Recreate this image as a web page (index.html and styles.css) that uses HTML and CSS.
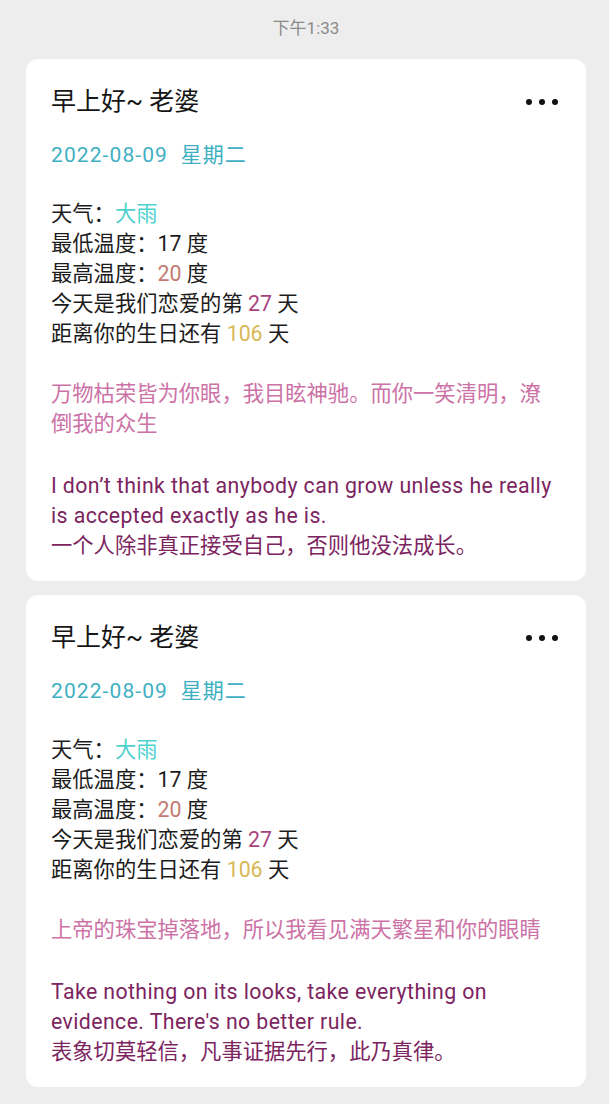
FILE: index.html
```html
<!DOCTYPE html>
<html lang="zh-CN">
<head>
<meta charset="utf-8">
<title>早上好</title>
<link rel="stylesheet" href="styles.css">
</head>
<body>
<div class="page">
  <div class="time">下午1:33</div>

  <div class="card">
    <div class="head">
      <div class="title">早上好~ 老婆</div>
      <div class="more"><span></span><span></span><span></span></div>
    </div>
    <div class="date">2022-08-09&nbsp;&nbsp;星期二</div>
    <div class="stats">
      <div>天气：<span class="rain">大雨</span></div>
      <div>最低温度：17 度</div>
      <div>最高温度：<span class="high">20</span> 度</div>
      <div>今天是我们恋爱的第 <span class="love">27</span> 天</div>
      <div>距离你的生日还有 <span class="bday">106</span> 天</div>
    </div>
    <div class="quote">万物枯荣皆为你眼，我目眩神驰。而你一笑清明，潦倒我的众生</div>
    <div class="saying"><span class="en">I don’t think that anybody can grow unless he really is accepted exactly as he is.</span><br>一个人除非真正接受自己，否则他没法成长。</div>
  </div>

  <div class="card">
    <div class="head">
      <div class="title">早上好~ 老婆</div>
      <div class="more"><span></span><span></span><span></span></div>
    </div>
    <div class="date">2022-08-09&nbsp;&nbsp;星期二</div>
    <div class="stats">
      <div>天气：<span class="rain">大雨</span></div>
      <div>最低温度：17 度</div>
      <div>最高温度：<span class="high">20</span> 度</div>
      <div>今天是我们恋爱的第 <span class="love">27</span> 天</div>
      <div>距离你的生日还有 <span class="bday">106</span> 天</div>
    </div>
    <div class="quote">上帝的珠宝掉落地，所以我看见满天繁星和你的眼睛</div>
    <div class="saying"><span class="en">Take nothing on its looks, take everything on evidence. There's no better rule.</span><br>表象切莫轻信，凡事证据先行，此乃真律。</div>
  </div>
</div>
</body>
</html>
```

FILE: styles.css
```css
html, body {
  margin: 0;
  padding: 0;
  background: #ededed;
}

body {
  font-family: Roboto, "Noto Sans CJK SC", sans-serif;
  color: #1a1a1a;
}

.page {
  padding: 18px 23px 0 26px;
  display: flex;
  flex-direction: column;
}

.time {
  text-align: center;
  font-size: 17px;
  line-height: 20px;
  color: #8a8a8a;
  margin-bottom: 21px;
}

.card {
  background: #ffffff;
  border-radius: 12px;
  padding: 28px 27px 20px 25px;
  margin-bottom: 14px;
  font-size: 21.3px;
  line-height: 30px;
}

.head {
  display: flex;
  justify-content: space-between;
  align-items: center;
}

.title {
  font-size: 25px;
  line-height: 30px;
  color: #151515;
}

.more {
  display: flex;
  gap: 7px;
  padding-right: 1px;
}

.more span {
  width: 6px;
  height: 6px;
  border-radius: 50%;
  background: #111;
}

.date {
  margin-top: 23px;
  font-size: 21px;
  letter-spacing: 1.1px;
  color: #3fb0c2;
}

.stats {
  margin-top: 29px;
  color: #1c1c1c;
}

.rain { color: #4fd2d0; }
.high { color: #c47a72; }
.love { color: #a8447e; }
.bday { color: #d9b857; }

.quote {
  margin-top: 30px;
  color: #cc72a6;
}

.saying {
  margin-top: 32px;
  color: #7c2460;
}

.en {
  letter-spacing: 0.4px;
}
```
